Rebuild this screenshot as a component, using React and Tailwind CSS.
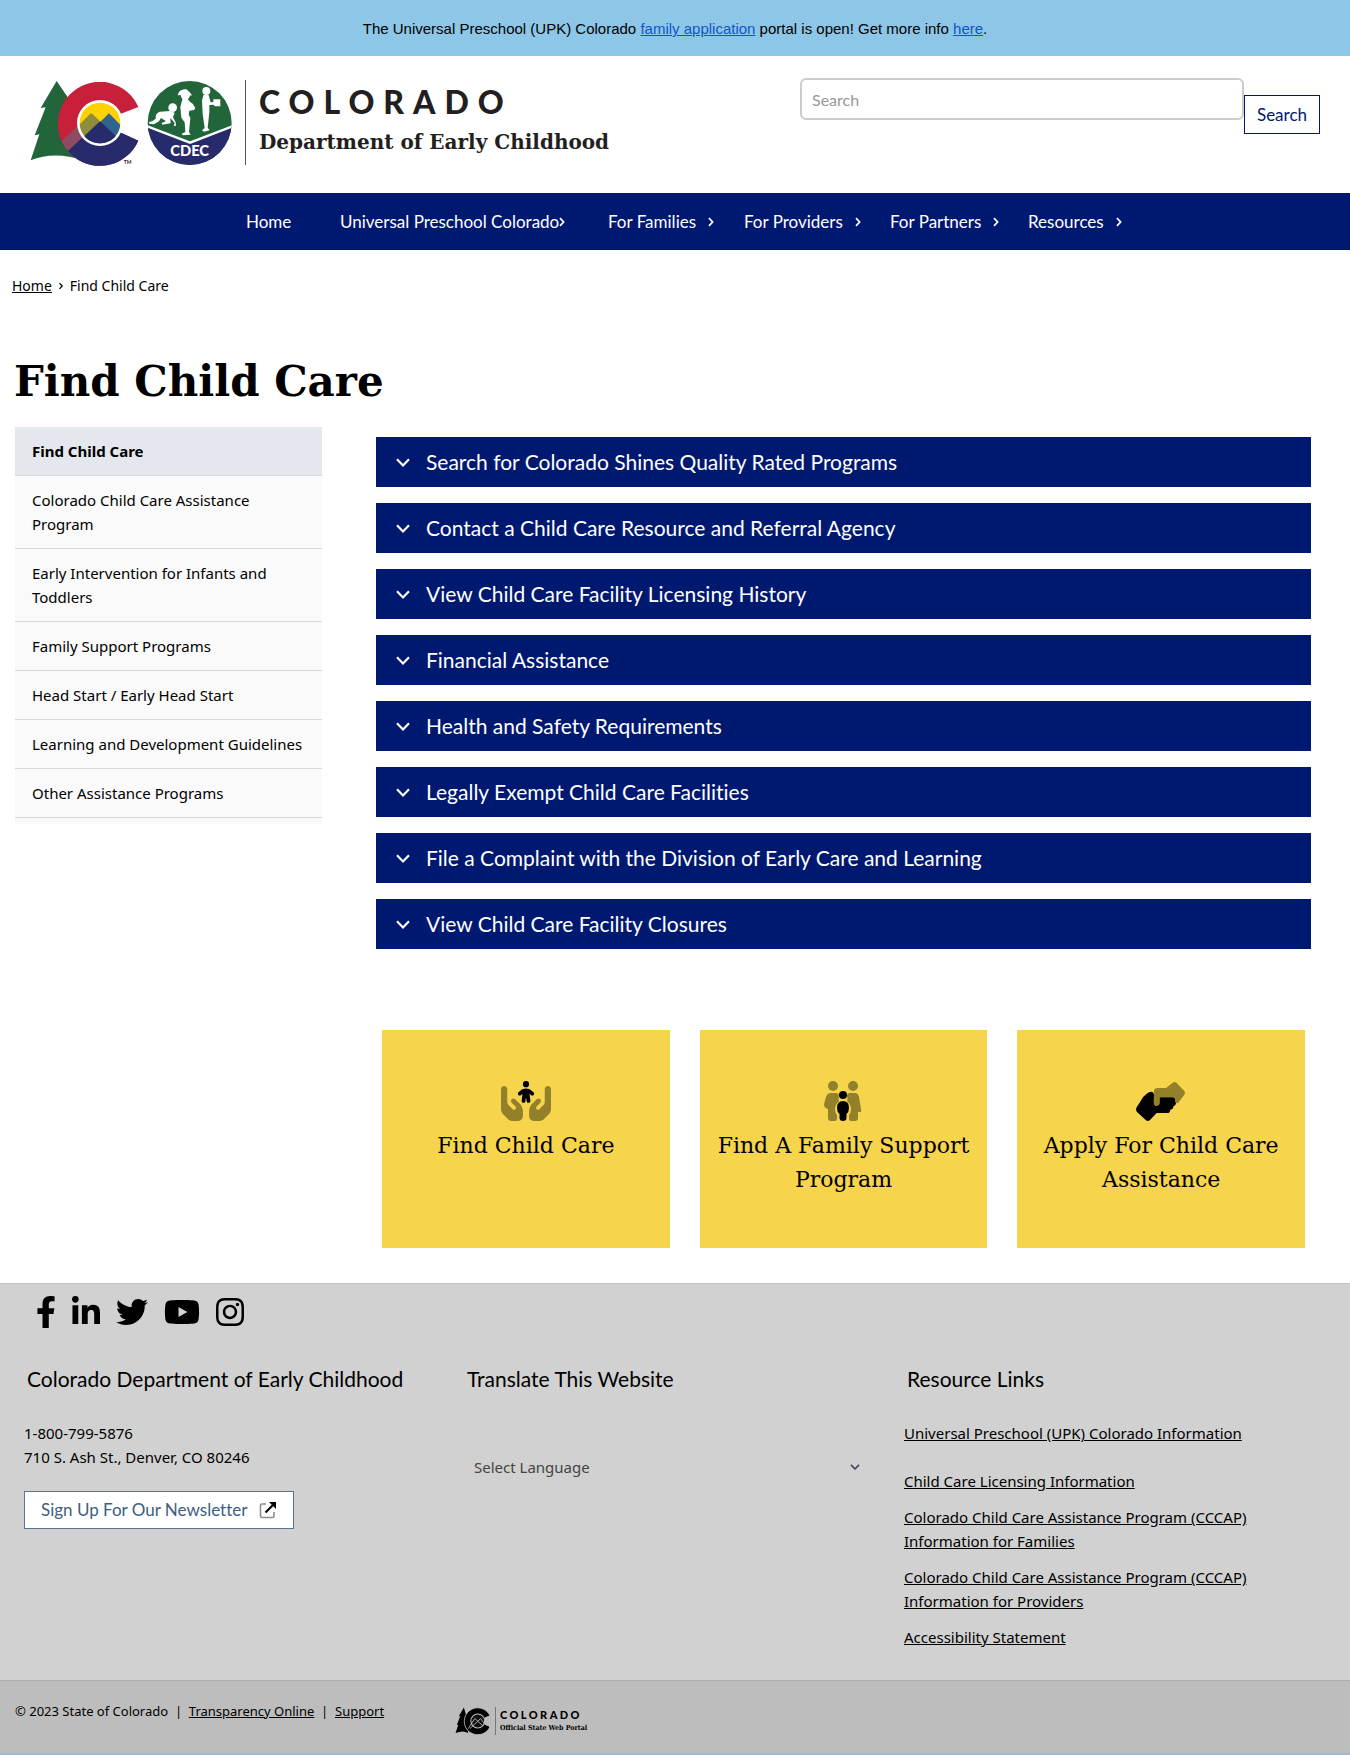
import React from "react";
import { FaFacebookF, FaLinkedinIn, FaTwitter, FaYoutube, FaInstagram } from "react-icons/fa";

const sans = "font-['Lato',sans-serif] [font-variant-ligatures:none]";
const slab = "font-['DejaVu_Serif',serif]";

const navItems = [
  { label: "Home", width: "w-[94px]" },
  { label: "Universal Preschool Colorado", width: "w-[268px]", arrow: "ml-0" },
  { label: "For Families", width: "w-[136px]", arrow: "ml-3" },
  { label: "For Providers", width: "w-[146px]", arrow: "ml-3" },
  { label: "For Partners", width: "w-[138px]", arrow: "ml-3" },
  { label: "Resources", width: "w-[100px]", arrow: "ml-3" },
];

const sideItems = [
  "Colorado Child Care Assistance Program",
  "Early Intervention for Infants and Toddlers",
  "Family Support Programs",
  "Head Start / Early Head Start",
  "Learning and Development Guidelines",
  "Other Assistance Programs",
];

const sections = [
  "Search for Colorado Shines Quality Rated Programs",
  "Contact a Child Care Resource and Referral Agency",
  "View Child Care Facility Licensing History",
  "Financial Assistance",
  "Health and Safety Requirements",
  "Legally Exempt Child Care Facilities",
  "File a Complaint with the Division of Early Care and Learning",
  "View Child Care Facility Closures",
];

const resourceLinks = [
  "Child Care Licensing Information",
  "Colorado Child Care Assistance Program (CCCAP) Information for Families",
  "Colorado Child Care Assistance Program (CCCAP) Information for Providers",
  "Accessibility Statement",
];

function Logo() {
  return (
    <svg viewBox="0 0 675 300" className="h-[100px] w-[225px] shrink-0" aria-hidden="true">
      <defs>
        <clipPath id="ring">
          <path d="M355 105A126 126 0 1 0 355 206L303 182L303 125Z" />
        </clipPath>
        <clipPath id="disc">
          <circle cx="240" cy="153" r="61" />
        </clipPath>
        <clipPath id="badge">
          <circle cx="509" cy="153" r="126" />
        </clipPath>
      </defs>
      <path d="M110 27L62 108L77 106L44 190L58 187L32 265Q105 236 190 266L180 130Z" fill="#22653a" />
      <g clipPath="url(#ring)">
        <rect x="110" y="20" width="260" height="265" fill="#c8203a" />
        <path d="M110 222L213 123L260 170L152 262L110 290Z" fill="#8d4c64" />
        <path d="M130 250L240 148L303 182L370 182V290H110Z" fill="#272a6b" />
      </g>
      <circle cx="240" cy="153" r="69" fill="#fff" />
      <g clipPath="url(#disc)">
        <rect x="170" y="85" width="140" height="140" fill="#ffd100" />
        <path d="M150 186L213 123L276 190L200 220Z" fill="#8f8d3c" />
        <path d="M200 190L267 124L330 188V220H200Z" fill="#2f648d" />
        <path d="M240 148L218 168L196 146L217 126Z" fill="#8f8d3c" />
        <path d="M150 232L240 148L330 232Z" fill="#272a6b" />
      </g>
      <text x="311" y="275" fontSize="15" fontFamily="Lato, sans-serif" fontWeight="700" fill="#222">TM</text>
      <g clipPath="url(#badge)">
        <rect x="380" y="25" width="260" height="260" fill="#22653a" />
        <path d="M380 162L510 212L640 162V285H380Z" fill="#272a6b" />
        <path d="M380 162L510 212L640 162" fill="none" stroke="#fff" strokeWidth="7" />
      </g>
      <g fill="#fff">
        <circle cx="458" cy="107" r="13" />
        <path d="M450 117L420 119Q405 124 407 140L397 148L388 149L387 155L402 157L417 148L423 138L438 148L425 153L427 158L452 154L451 138L464 153L461 162L468 161L467 151L459 136L464 122Z" />
        <circle cx="496" cy="69" r="14" />
        <path d="M473 70Q477 50 499 52L511 63L516 70L509 71L500 65L486 69Z" />
        <path d="M488 79L502 80Q511 91 518 95L526 108L522 114L508 116L506 127L511 139L507 181L512 188L488 190L485 185L496 180L494 151L484 137L481 105Z" />
        <circle cx="559" cy="57" r="12" />
        <path d="M550 69L566 69L572 91L580 91L580 82H601V103H585L580 98L568 99L568 121L563 167L569 175L552 179L546 175L554 168L548 126L546 86Z" />
      </g>
      <text x="509" y="252" textAnchor="middle" fontSize="44" fontFamily="Lato, sans-serif" fontWeight="900" fill="#fff">CDEC</text>
    </svg>
  );
}

function PortalMark() {
  return (
    <svg viewBox="28 22 335 262" className="h-7 w-9 shrink-0" aria-hidden="true">
      <path d="M110 27L62 108L77 106L44 190L58 187L32 265Q105 236 150 266L140 130Z" fill="#000" />
      <path d="M355 105A126 126 0 1 0 355 206L303 182L303 125Z" fill="#000" stroke="#bdbdbd" strokeWidth="8" />
      <circle cx="240" cy="153" r="65" fill="#111" stroke="#bdbdbd" strokeWidth="10" />
      <path d="M150 225L213 130L240 155L267 130L300 175M165 225L240 155L290 200" fill="none" stroke="#bdbdbd" strokeWidth="8" />
    </svg>
  );
}

function ChevronRight({ className }) {
  return (
    <svg viewBox="0 0 6 10" className={"h-2.5 w-1.5 shrink-0 " + className} aria-hidden="true">
      <path d="M1 1.2L4.6 5L1 8.8" fill="none" stroke="currentColor" strokeWidth="1.7" />
    </svg>
  );
}

function ChevronDown({ className }) {
  return (
    <svg viewBox="0 0 14 9" className={className} aria-hidden="true">
      <path d="M1 1.3L7 7.4L13 1.3" fill="none" stroke="currentColor" strokeWidth="2.2" />
    </svg>
  );
}

const handPath =
  "M40 64c22.1 0 40 17.9 40 40v160.2c0 17 6.7 33.3 18.7 45.3l51.1 51.1c8.3 8.3 21.3 9.6 31 3.1c12.9-8.6 14.7-26.9 3.7-37.8l-15.2-15.2-32-32c-12.5-12.5-12.5-32.8 0-45.3s32.8-12.5 45.3 0l32 32 15.2 15.2 11 11c25.3 25.3 39.5 59.6 39.5 95.4V448c0 35.3-28.7 64-64 64H140.9c-17 0-33.3-6.7-45.3-18.7L28.1 425.8C10.1 407.8 0 383.4 0 357.9V104C0 81.9 17.9 64 40 64z";

function HandsChildIcon() {
  return (
    <svg viewBox="0 0 640 512" className="h-10 w-[50px]" aria-hidden="true">
      <g fill="#93802a">
        <path d={handPath} />
        <path d={handPath} transform="translate(640 0) scale(-1 1)" />
      </g>
      <path d="M320 0a40 40 0 1 1 0 80 40 40 0 1 1 0-80zm44.7 164.3L375.8 253c1.6 13.2-7.7 25.1-20.8 26.8s-25.1-7.7-26.8-20.8l-4.4-35h-7.6l-4.4 35c-1.6 13.2-13.6 22.5-26.8 20.8s-22.5-13.6-20.8-26.8l11.1-88.8L255.5 181c-10.1 8.6-25.3 7.3-33.8-2.8s-7.3-25.3 2.8-33.8l27.9-23.6C271.3 104.8 295.3 96 320 96s48.7 8.8 67.6 24.7l27.9 23.6c10.1 8.6 11.4 23.7 2.8 33.8s-23.7 11.4-33.8 2.8l-19.8-16.7z" />
    </svg>
  );
}

function FamilyIcon() {
  return (
    <svg viewBox="0 0 38 40" className="h-10 w-[38px]" aria-hidden="true">
      <g fill="#93802a">
        <circle cx="9" cy="5" r="5" />
        <circle cx="29" cy="5" r="5" />
        <path d="M7 12H12Q15 12 15 15Q14 18 15 20Q11 24 11 28Q11 32 13 34V38Q13 40 11 40H7Q4 40 4 37V28Q0 27 0 23L2 16Q3 12 7 12Z" />
        <path d="M31 12H26Q23 12 23 15Q24 18 23 20Q27 24 27 28Q27 32 25 34V38Q25 40 27 40H31Q34 40 34 37V31H36Q38 31 37 28L35 16Q34 12 31 12Z" />
      </g>
      <circle cx="19" cy="14" r="4" />
      <path d="M19 20Q25 20 25 27Q25 31 22.500 33V37Q22.500 40 19 40Q15.500 40 15.500 37V33Q13 31 13 27Q13 20 19 20Z" />
    </svg>
  );
}

function HelpingHandsIcon() {
  return (
    <svg viewBox="50 30 150 120" className="h-10 w-[50px]" aria-hidden="true">
      <path d="M84 67Q92 60 100 63L104 70V98Q106 105 112 104Q120 103 120 96V79H162Q169 81 168 90L170 97Q169 104 162 106Q163 115 153 116Q152 126 144 126H112L92 147Q85 153 79 147L53 123Q48 117 52 109L64 90Q70 77 84 67Z" fill="#000" />
      <path d="M104 58Q106 51 116 51H140L160 35Q166 31 172 36L195 60Q199 66 195 71L178 94Q173 100 169 94L167 83Q164 78 159 78H121V96Q120 104 112 104Q104 103 103 96Z" fill="#93802a" />
    </svg>
  );
}

function ExternalIcon() {
  return (
    <svg viewBox="0 0 18 18" className="size-[18px]" aria-hidden="true">
      <path d="M7 3H3Q1.500 3 1.500 4.500V15Q1.500 16.500 3 16.500H13.500Q15 16.500 15 15V11" fill="none" stroke="#8a8f96" strokeWidth="1.6" />
      <path d="M6.500 11.500L15 3" stroke="#000" strokeWidth="2.200" />
      <path d="M10 1H17V8L14.500 5.500L12.500 3.500Z" />
    </svg>
  );
}

const cards = [
  { title: "Find Child Care", Icon: HandsChildIcon },
  { title: "Find A Family Support Program", Icon: FamilyIcon },
  { title: "Apply For Child Care Assistance", Icon: HelpingHandsIcon },
];

const socials = [
  { name: "Facebook", Icon: FaFacebookF, size: "h-8 w-5" },
  { name: "LinkedIn", Icon: FaLinkedinIn, size: "h-8 w-7" },
  { name: "Twitter", Icon: FaTwitter, size: "size-8" },
  { name: "YouTube", Icon: FaYoutube, size: "h-8 w-9" },
  { name: "Instagram", Icon: FaInstagram, size: "h-8 w-7" },
];

export default function App() {
  return (
    <div className="bg-white font-['Noto_Sans',sans-serif] text-[15px] leading-6 text-black">
      <div className="flex h-14 items-center justify-center bg-[#8dc6e7] px-4 pt-0.5 font-['Liberation_Sans',sans-serif] text-[15px]">
        <p>
          The Universal Preschool (UPK) Colorado{" "}
          <a href="#apply" className="text-[#1155cc] underline">family application</a> portal is open! Get more info{" "}
          <a href="#info" className="text-[#1155cc] underline">here</a>.
        </p>
      </div>

      <header className="flex h-[137px] items-start justify-between pr-[30px] pl-5">
        <div className="flex items-start pt-4 text-[#231f20]">
          <Logo />
          <div className="mt-2 h-[85px] w-px bg-[#555]" />
          <div className="pt-3 pl-[13px]">
            <div className={`${sans} text-[32px] leading-9 font-black tracking-[0.28em]`}>COLORADO</div>
            <div className={`${slab} mt-2 text-xl leading-7 font-bold`}>Department of Early Childhood</div>
          </div>
        </div>
        <form className={`${sans} flex pt-[22px] text-base`} onSubmit={(e) => e.preventDefault()}>
          <input
            type="search"
            aria-label="Search"
            placeholder="Search"
            className="h-[42px] w-[444px] rounded-md border-2 border-[#ccc] px-2.5 placeholder:text-[#999]"
          />
          <button type="submit" className="mt-[17px] h-[39px] w-[76px] border border-[#001970] text-[17px] text-[#001970]">
            Search
          </button>
        </form>
      </header>

      <nav className={`${sans} bg-[#001970] pl-6 text-[17px] text-white`} aria-label="Main">
        <ul className="flex h-[57px] items-center justify-center">
          {navItems.map(({ label, width, arrow }) => (
            <li key={label} className={width}>
              <a href="#nav" className="flex items-center whitespace-nowrap">
                {label}
                {arrow && <ChevronRight className={arrow} />}
              </a>
            </li>
          ))}
        </ul>
      </nav>

      <div className="flex items-center gap-1.5 pt-[26px] pl-3 text-sm">
        <a href="#home" className="underline">Home</a>
        <ChevronRight className="scale-75" />
        <span>Find Child Care</span>
      </div>

      <h1 className={`${slab} mt-[54px] pl-3.5 text-[42px] leading-[64px] font-bold`}>Find Child Care</h1>

      <main className="flex items-start gap-[54px] pt-[13px] pr-[39px] pl-[15px]">
        <nav className="w-[307px] shrink-0 bg-[#fafafa] pb-1.5" aria-label="Section">
          <ul>
            <li className="border-b border-[#d8d8dc] bg-[#e4e7ee] py-3 pr-4 pl-[17px] font-bold">
              <a href="#find">Find Child Care</a>
            </li>
            {sideItems.map((label) => (
              <li key={label} className="border-b border-[#d8d8d8] py-3 pr-4 pl-[17px]">
                <a href="#section">{label}</a>
              </li>
            ))}
          </ul>
        </nav>

        <div className="grow pt-2.5">
          <div className="flex flex-col gap-4">
            {sections.map((label) => (
              <button
                key={label}
                type="button"
                aria-expanded="false"
                className={`${sans} flex h-[50px] w-full items-center gap-4 bg-[#001970] px-5 text-left text-[21px] text-white`}
              >
                <ChevronDown className="h-[9px] w-3.5" />
                {label}
              </button>
            ))}
          </div>
          <div className="mt-[81px] grid grid-cols-3 gap-[30px] px-1.5">
            {cards.map(({ title, Icon }) => (
              <a
                key={title}
                href="#card"
                className={`${slab} flex h-[218px] flex-col items-center bg-[#f6d44b] px-2 pt-[51px] text-center text-[22px] leading-[34px]`}
              >
                <Icon />
                <span className="mt-2">{title}</span>
              </a>
            ))}
          </div>
        </div>
      </main>

      <footer className="mt-[35px]">
        <div className="h-[397px] border-t border-[#c4c4c4] bg-[#d1d1d1] pr-1.5 pl-6">
          <div className="flex items-center gap-4 pt-3 pl-3">
            {socials.map(({ name, Icon, size }) => (
              <a key={name} href="#social" aria-label={name}>
                <Icon className={size} />
              </a>
            ))}
          </div>
          <div className="mt-9 grid grid-cols-3">
            <section>
              <h2 className={`${sans} pl-[3px] text-[21px] leading-[30px]`}>Colorado Department of Early Childhood</h2>
              <p className="mt-[27px]">
                1-800-799-5876
                <br />
                710 S. Ash St., Denver, CO 80246
              </p>
              <a
                href="#newsletter"
                className={`${sans} mt-[22px] inline-flex h-[38px] items-center gap-3 border border-[#5b7590] bg-white px-4 text-[17px] text-[#3c6080]`}
              >
                Sign Up For Our Newsletter
                <ExternalIcon />
              </a>
            </section>
            <section>
              <h2 className={`${sans} pl-[3px] text-[21px] leading-[30px]`}>Translate This Website</h2>
              <div className="relative mt-[54px] mr-9 text-[#444]">
                <select
                  aria-label="Select Language"
                  className="h-[38px] w-full appearance-none bg-transparent pl-2.5 text-[15px]"
                >
                  <option>Select Language</option>
                </select>
                <ChevronDown className="pointer-events-none absolute top-4 right-2 h-1.5 w-2.5 text-[#3a3f60]" />
              </div>
            </section>
            <section>
              <h2 className={`${sans} pl-[3px] text-[21px] leading-[30px]`}>Resource Links</h2>
              <a href="#upk" className="mt-[27px] block underline">
                Universal Preschool (UPK) Colorado Information
              </a>
              <ul className="mt-6 flex w-[360px] flex-col gap-3">
                {resourceLinks.map((label) => (
                  <li key={label}>
                    <a href="#resource" className="underline">{label}</a>
                  </li>
                ))}
              </ul>
            </section>
          </div>
        </div>
        <div className="flex h-[75px] items-start border-t border-b-2 border-t-[#adadad] border-b-[#a3b9cf] bg-[#bdbdbd] pt-[18px] pl-[15px] text-[13px]">
          <p className="w-[440px]">
            © 2023 State of Colorado &nbsp;|&nbsp; <a href="#transparency" className="underline">Transparency Online</a>{" "}
            &nbsp;|&nbsp; <a href="#support" className="underline">Support</a>
          </p>
          <div className="flex items-center pt-2">
            <PortalMark />
            <div className="ml-1 h-7 w-px bg-[#777]" />
            <div className="pl-1">
              <div className={`${sans} text-[11px] leading-[14px] font-black tracking-[0.22em]`}>COLORADO</div>
              <div className="font-['DejaVu_Serif_Condensed',serif] text-[7px] leading-3 font-bold">Official State Web Portal</div>
            </div>
          </div>
        </div>
      </footer>
    </div>
  );
}
